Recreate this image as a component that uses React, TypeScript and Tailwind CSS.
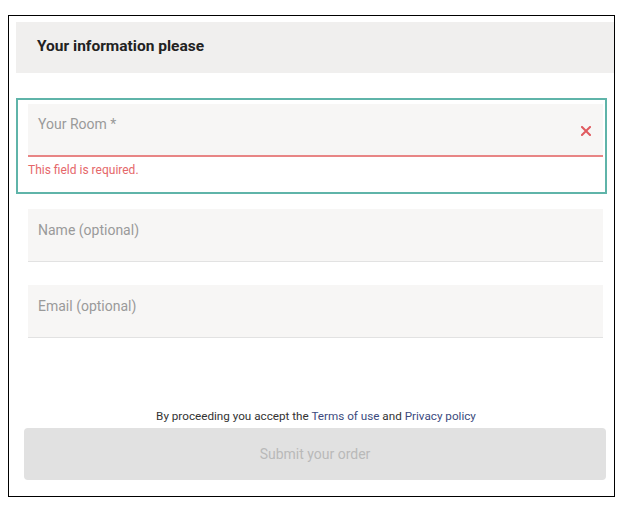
import React from "react";

export default function App() {
  return (
    <div className="w-[625px] h-[512px] bg-white pt-[15px] pl-[8px]" style={{ fontFamily: "Roboto, 'Liberation Sans', sans-serif" }}>
      <div className="w-[607px] h-[482px] border border-black flex flex-col">
        <div className="mt-[6px] ml-[7px] h-[51px] bg-[#f0efee] flex items-center pl-[21px] pb-[1px]">
          <span className="text-[15.5px] font-bold text-[#222]">Your information please</span>
        </div>

        <div className="mt-[25px] ml-[7px] w-[591px] h-[96px] border-2 border-[#5fb4a9] pt-[4px] pl-[10px] pr-[2px]">
          <div className="h-[53px] bg-[#f7f6f5] border-b-2 border-[#e88585] flex items-start justify-between pl-[10px] pr-[12px]">
            <span className="mt-[10px] text-[14px] text-[#9a9a9a]">Your Room *</span>
            <svg className="mt-[22px]" width="10" height="10" viewBox="0 0 10 10">
              <path d="M1 1 L9 9 M9 1 L1 9" stroke="#e05a5f" strokeWidth="2" strokeLinecap="square" />
            </svg>
          </div>
          <div className="mt-[6px] text-[12px] leading-[14px] text-[#e5676a]">This field is required.</div>
        </div>

        <div className="mt-[15px] ml-[19px] w-[575px] h-[53px] bg-[#f7f6f5] border-b border-[#e2e2e2] pl-[10px] pt-[9px]">
          <span className="text-[14px] text-[#9a9a9a]">Name (optional)</span>
        </div>

        <div className="mt-[23px] ml-[19px] w-[575px] h-[53px] bg-[#f7f6f5] border-b border-[#e2e2e2] pl-[10px] pt-[9px]">
          <span className="text-[14px] text-[#9a9a9a]">Email (optional)</span>
        </div>

        <div className="mt-[71px] pl-[9px] text-center text-[11.7px] leading-[14px] text-[#333]">
          By proceeding you accept the <span className="text-[#3b4a7e]">Terms of use</span> and <span className="text-[#3b4a7e]">Privacy policy</span>
        </div>

        <div className="mt-[5px] ml-[15px] w-[582px] h-[52px] rounded-[4px] bg-[#e1e1e1] flex items-center justify-center">
          <span className="text-[14px] text-[#b9b9b9]">Submit your order</span>
        </div>
      </div>
    </div>
  );
}
